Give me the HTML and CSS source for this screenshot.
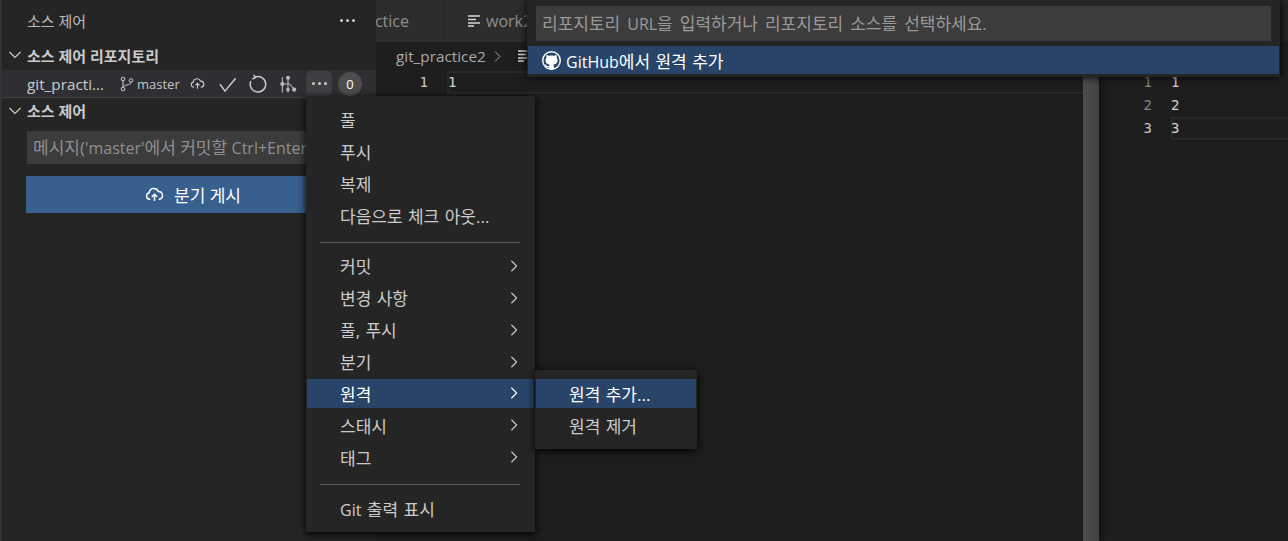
FILE: index.html
```html
<!DOCTYPE html>
<html lang="ko">
<head>
<meta charset="utf-8">
<title>소스 제어</title>
<link rel="stylesheet" href="styles.css">
</head>
<body>
<div class="workbench">
  <div class="activity"></div>
  <aside class="sidebar">
    <header class="side-title"><span>소스 제어</span><span class="dots"><i></i><i></i><i></i></span></header>
    <div class="section-head"><svg class="twist" viewBox="0 0 16 16"><path d="M2.5 5l5.5 5.5L13.500 5"/></svg><span>소스 제어 리포지토리</span></div>
    <div class="repo">
      <span class="repo-name">git_practi...</span>
      <svg class="ic-branch" viewBox="0 0 16 16"><circle cx="4" cy="3" r="1.800"/><circle cx="4" cy="13" r="1.800"/><circle cx="12" cy="4.500" r="1.800"/><path d="M4 4.800v6.400M12 6.300c0 3-8 2.500-8 4.900"/></svg>
      <span class="branch">master</span>
      <svg class="ic-cloud" viewBox="0 0 16 16"><path d="M4.500 12H3.800A2.800 2.800 0 0 1 3.500 6.500 4 4 0 0 1 11.200 5.500 3.300 3.300 0 0 1 12.200 12H11.500M8 13.500V8M5.800 10L8 7.800 10.200 10"/></svg>
      <svg class="ic-check" viewBox="0 0 16 16"><path d="M1.600 8.200l4 5.500 8.500-10.300"/></svg>
      <svg class="ic-refresh" viewBox="0 0 16 16"><path d="M5.300 2.600A6.200 6.200 0 1 1 2.300 5.700M4.600 .6L5.900 2.900 3.400 4"/></svg>
      <svg class="ic-graph" viewBox="0 0 16 16"><circle cx="8" cy="2.500" r="1.900" class="fill"/><circle cx="3" cy="8" r="1.900" class="fill"/><circle cx="13.500" cy="13" r="1.900" class="fill"/><circle cx="8" cy="13" r="1.600" class="fill"/><path d="M8 2.500V15.500M3 2V15.500M3 8H9.500L13.500 13"/></svg>
      <span class="more-btn"><i></i><i></i><i></i></span>
      <span class="count">0</span>
    </div>
    <div class="section-head second"><svg class="twist" viewBox="0 0 16 16"><path d="M2.5 5l5.5 5.500L13.500 5"/></svg><span>소스 제어</span></div>
    <div class="commit-input">메시지(<span class="lat">'master'</span>에서 커밋할 <span class="lat">Ctrl+Enter</span>)</div>
    <button class="publish"><svg class="ic-cloud-w" viewBox="0 0 16 16"><path d="M4.500 12H3.800A2.800 2.800 0 0 1 3.500 6.500 4 4 0 0 1 11.200 5.500 3.300 3.300 0 0 1 12.200 12H11.500M8 13.500V8M5.800 10L8 7.800 10.200 10"/></svg><span>분기 게시</span></button>
  </aside>

  <main class="group left-group">
    <div class="tabs">
      <div class="tab tab-first"><span>git_practice</span></div>
      <div class="tab tab-second"><svg class="ic-lines" viewBox="0 0 16 16"><path d="M2 3h12M2 6.500h8M2 10h12M2 13h6"/></svg><span>work2</span></div>
    </div>
    <div class="crumbs"><span>git_practice2</span><svg class="crumb-chev" viewBox="0 0 16 16"><path d="M5 2l6 6-6 6"/></svg><svg class="ic-lines" viewBox="0 0 16 16"><path d="M2 3h12M2 6.500h8M2 10h12M2 13h6"/></svg></div>
    <div class="code">
      <div class="line current"><span class="num active">1</span><span class="txt">1</span></div>
    </div>
  </main>
  <div class="scrollbar"></div>
  <section class="group right-group">
    <div class="tabs"></div>
    <div class="crumbs"></div>
    <div class="code code-right">
      <div class="line"><span class="num">1</span><span class="txt">1</span></div>
      <div class="line"><span class="num">2</span><span class="txt">2</span></div>
      <div class="line current"><span class="num active">3</span><span class="txt">3</span></div>
    </div>
  </section>
</div>

<div class="quick">
  <div class="quick-input">리포지토리 <span class="lat">URL</span>을 입력하거나 리포지토리 소스를 선택하세요.</div>
  <div class="quick-item"><svg class="ic-github" viewBox="0 0 16 16"><circle class="gh-ring" cx="8" cy="8" r="7.400"/><path d="M5.470 15.590c.4.070.55-.17.55-.38 0-.19-.01-.82-.01-1.490-2.010.37-2.530-.49-2.690-.94-.09-.23-.48-.94-.82-1.130-.28-.15-.68-.52-.01-.53.63-.01 1.080.58 1.230.82.72 1.210 1.870.87 2.330.66.07-.52.28-.87.51-1.070-1.780-.2-3.640-.89-3.640-3.950 0-.87.31-1.590.82-2.150-.08-.2-.36-1.020.08-2.120 0 0 .67-.21 2.200.82.64-.18 1.320-.27 2-.27.68 0 1.360.09 2 .27 1.530-1.040 2.200-.82 2.200-.82.44 1.100.16 1.920.08 2.120.51.56.82 1.270.82 2.150 0 3.070-1.870 3.750-3.650 3.950.29.25.54.73.54 1.480 0 1.070-.01 1.930-.01 2.200 0 .21.15.46.55.38z"/></svg><span><span class="lat">GitHub</span>에서 원격 추가</span></div>
</div>

<nav class="menu">
  <div class="mi"><span>풀</span></div>
  <div class="mi"><span>푸시</span></div>
  <div class="mi"><span>복제</span></div>
  <div class="mi"><span>다음으로 체크 아웃...</span></div>
  <div class="sep"></div>
  <div class="mi sub"><span>커밋</span><svg viewBox="0 0 16 16"><path d="M5 2l6 6-6 6"/></svg></div>
  <div class="mi sub"><span>변경 사항</span><svg viewBox="0 0 16 16"><path d="M5 2l6 6-6 6"/></svg></div>
  <div class="mi sub"><span>풀, 푸시</span><svg viewBox="0 0 16 16"><path d="M5 2l6 6-6 6"/></svg></div>
  <div class="mi sub"><span>분기</span><svg viewBox="0 0 16 16"><path d="M5 2l6 6-6 6"/></svg></div>
  <div class="mi sub on"><span>원격</span><svg viewBox="0 0 16 16"><path d="M5 2l6 6-6 6"/></svg></div>
  <div class="mi sub"><span>스태시</span><svg viewBox="0 0 16 16"><path d="M5 2l6 6-6 6"/></svg></div>
  <div class="mi sub"><span>태그</span><svg viewBox="0 0 16 16"><path d="M5 2l6 6-6 6"/></svg></div>
  <div class="sep sep-last"></div>
  <div class="mi"><span><span class="lat">Git</span> 출력 표시</span></div>
</nav>

<nav class="submenu">
  <div class="mi on"><span>원격 추가...</span></div>
  <div class="mi"><span>원격 제거</span></div>
</nav>
</body>
</html>
```
FILE: styles.css
```css
* { box-sizing: border-box; }
html, body { margin: 0; height: 100%; overflow: hidden; background: #1e1e1e; }
body { font-family: "Open Sans", "Noto Sans CJK KR", sans-serif; font-size: 17px; color: #cccccc; }
svg { fill: none; stroke: currentColor; flex: none; display: block; }
.lat { font-size: 16px; }

.workbench { display: flex; height: 541px; }
.activity { width: 2px; background: #333333; }

.sidebar { width: 374px; background: #252526; flex: none; }
.side-title { height: 40px; display: flex; align-items: center; justify-content: space-between; padding: 0 21px 0 25px; font-size: 15px; color: #bbbbbb; }
.dots, .more-btn { display: flex; gap: 3px; }
.dots i, .more-btn i { width: 3px; height: 3px; border-radius: 50%; background: #cccccc; }
.section-head { height: 30px; display: flex; align-items: center; padding-left: 5px; font-size: 15px; font-weight: 700; color: #cccccc; }
.section-head.second { height: 27px; }
.twist { width: 16px; height: 16px; margin-right: 4px; stroke-width: 1.200; }
.repo { height: 27px; background: #2f2f33; display: flex; align-items: center; padding-left: 25px; box-shadow: 0 1px 0 #3d3d3d; position: relative; }
.repo-name { width: 93px; font-size: 15.300px; color: #cccccc; white-space: nowrap; }
.ic-branch { width: 16px; height: 16px; stroke-width: 1; margin-right: 2px; margin-left: -1px; }
.branch { font-size: 13px; width: 53px; color: #c4c4c4; }
.ic-cloud { width: 15px; height: 15px; stroke-width: 1.200; margin-right: 13px; }
.ic-check { width: 20px; height: 20px; stroke-width: 1.200; margin-right: 10px; }
.ic-refresh { width: 20px; height: 20px; stroke-width: 1.200; margin-right: 11px; }
.ic-graph { width: 18px; height: 18px; stroke-width: 1; margin-right: 9px; color: #b5b5b5; }
.ic-graph .fill { fill: #b5b5b5; stroke: none; }
.more-btn { width: 26px; height: 25px; border-radius: 5px; background: #3f3f42; align-items: center; justify-content: center; margin-right: 6px; }
.count { width: 24px; height: 24px; border-radius: 50%; background: #4d4d4d; color: #ffffff; font-size: 13px; font-weight: 400; display: flex; align-items: center; justify-content: center; }
.commit-input { margin: 7px 0 0 25px; height: 33px; width: 340px; background: #3c3c3c; color: #8f8f8f; padding: 0 6px; line-height: 33px; white-space: nowrap; overflow: hidden; }
.publish { display: flex; margin: 12px 0 0 24px; width: 334px; height: 37px; border: 0; border-radius: 0; background: #37608f; color: #ffffff; align-items: center; justify-content: center; gap: 10px; font: inherit; padding: 0; }
.ic-cloud-w { width: 19px; height: 19px; stroke-width: 1.200; }

.group { display: flex; flex-direction: column; }
.left-group { width: 707px; flex: none; }
.right-group { flex: 1; min-width: 0; }
.tabs { height: 42px; background: #252526; display: flex; flex: none; }
.tab { background: #2d2d2d; display: flex; align-items: center; height: 42px; color: #8f8f8f; font-size: 16px; white-space: nowrap; overflow: hidden; }
.tab-first { width: 69px; justify-content: flex-end; padding-right: 35px; border-right: 1px solid #252526; }
.tab-second { flex: 1; padding-left: 21px; gap: 4px; }
.ic-lines { width: 16px; height: 16px; stroke-width: 1.600; color: #d8d8d8; }
.crumbs { height: 28px; display: flex; align-items: center; padding-left: 20px; color: #a9a9a9; font-size: 15.300px; flex: none; }
.crumb-chev { width: 13px; height: 13px; stroke-width: 1.200; margin: 0 12px 0 5px; }
.code { flex: 1; padding-top: 1px; font-family: "DejaVu Sans Mono", "Liberation Mono", monospace; font-size: 14px; }
.line { display: flex; height: 23px; line-height: 22px; color: #d4d4d4; }
.num { width: 71px; text-align: right; padding-right: 19px; color: #858585; flex: none; }
.num.active { color: #c6c6c6; }
.txt { flex: 1; padding-left: 1px; }
.line.current .txt { box-shadow: inset 2px 0 0 #282828, inset 0 2px 0 #282828, inset 0 -2px 0 #282828; }
.code-right .num { width: 72px; }
.code-right .txt { padding-left: 0; }
.scrollbar { width: 16px; flex: none; background: linear-gradient(90deg, #4d4d4d, #424242); box-shadow: 4px 0 5px #141414; position: relative; }

.quick { position: absolute; left: 527px; top: 0; width: 753px; height: 77px; background: #252526; box-shadow: 0 0 8px #000000; padding: 6px 1px 0; }
.quick-input { margin: 0 8px; height: 35px; background: #3c3c3c; color: #9a9a9a; line-height: 36px; padding: 0 6px; word-spacing: 2.600px; }
.quick-item { margin-top: 5px; height: 28px; background: #284569; color: #ffffff; display: flex; align-items: center; padding-left: 14px; gap: 5px; word-spacing: 1px; }
.ic-github { width: 19px; height: 19px; fill: #ffffff; stroke: none; }
.ic-github .gh-ring { fill: #284569; stroke: #ffffff; stroke-width: 1.200; }

.menu, .submenu { position: absolute; background: #252526; box-shadow: 0 2px 8px #000000; color: #cccccc; word-spacing: 1px; }
.menu { left: 306px; top: 96px; width: 229px; height: 436px; padding: 9px 1px 0; }
.submenu { left: 535px; top: 370px; width: 162px; height: 79px; padding: 9px 1px 0; }
.mi { height: 29px; margin-bottom: 2.900px; padding-left: 33px; display: flex; align-items: center; justify-content: space-between; padding-right: 13px; white-space: nowrap; }
.mi svg { width: 14px; height: 14px; stroke-width: 1.300; }
.mi.on { background: #284569; color: #ffffff; }
.sep { height: 1px; background: #5b5b5b; margin: 12.300px 14px 8.400px 13px; }
.sep-last { margin-bottom: 9.400px; }
```
